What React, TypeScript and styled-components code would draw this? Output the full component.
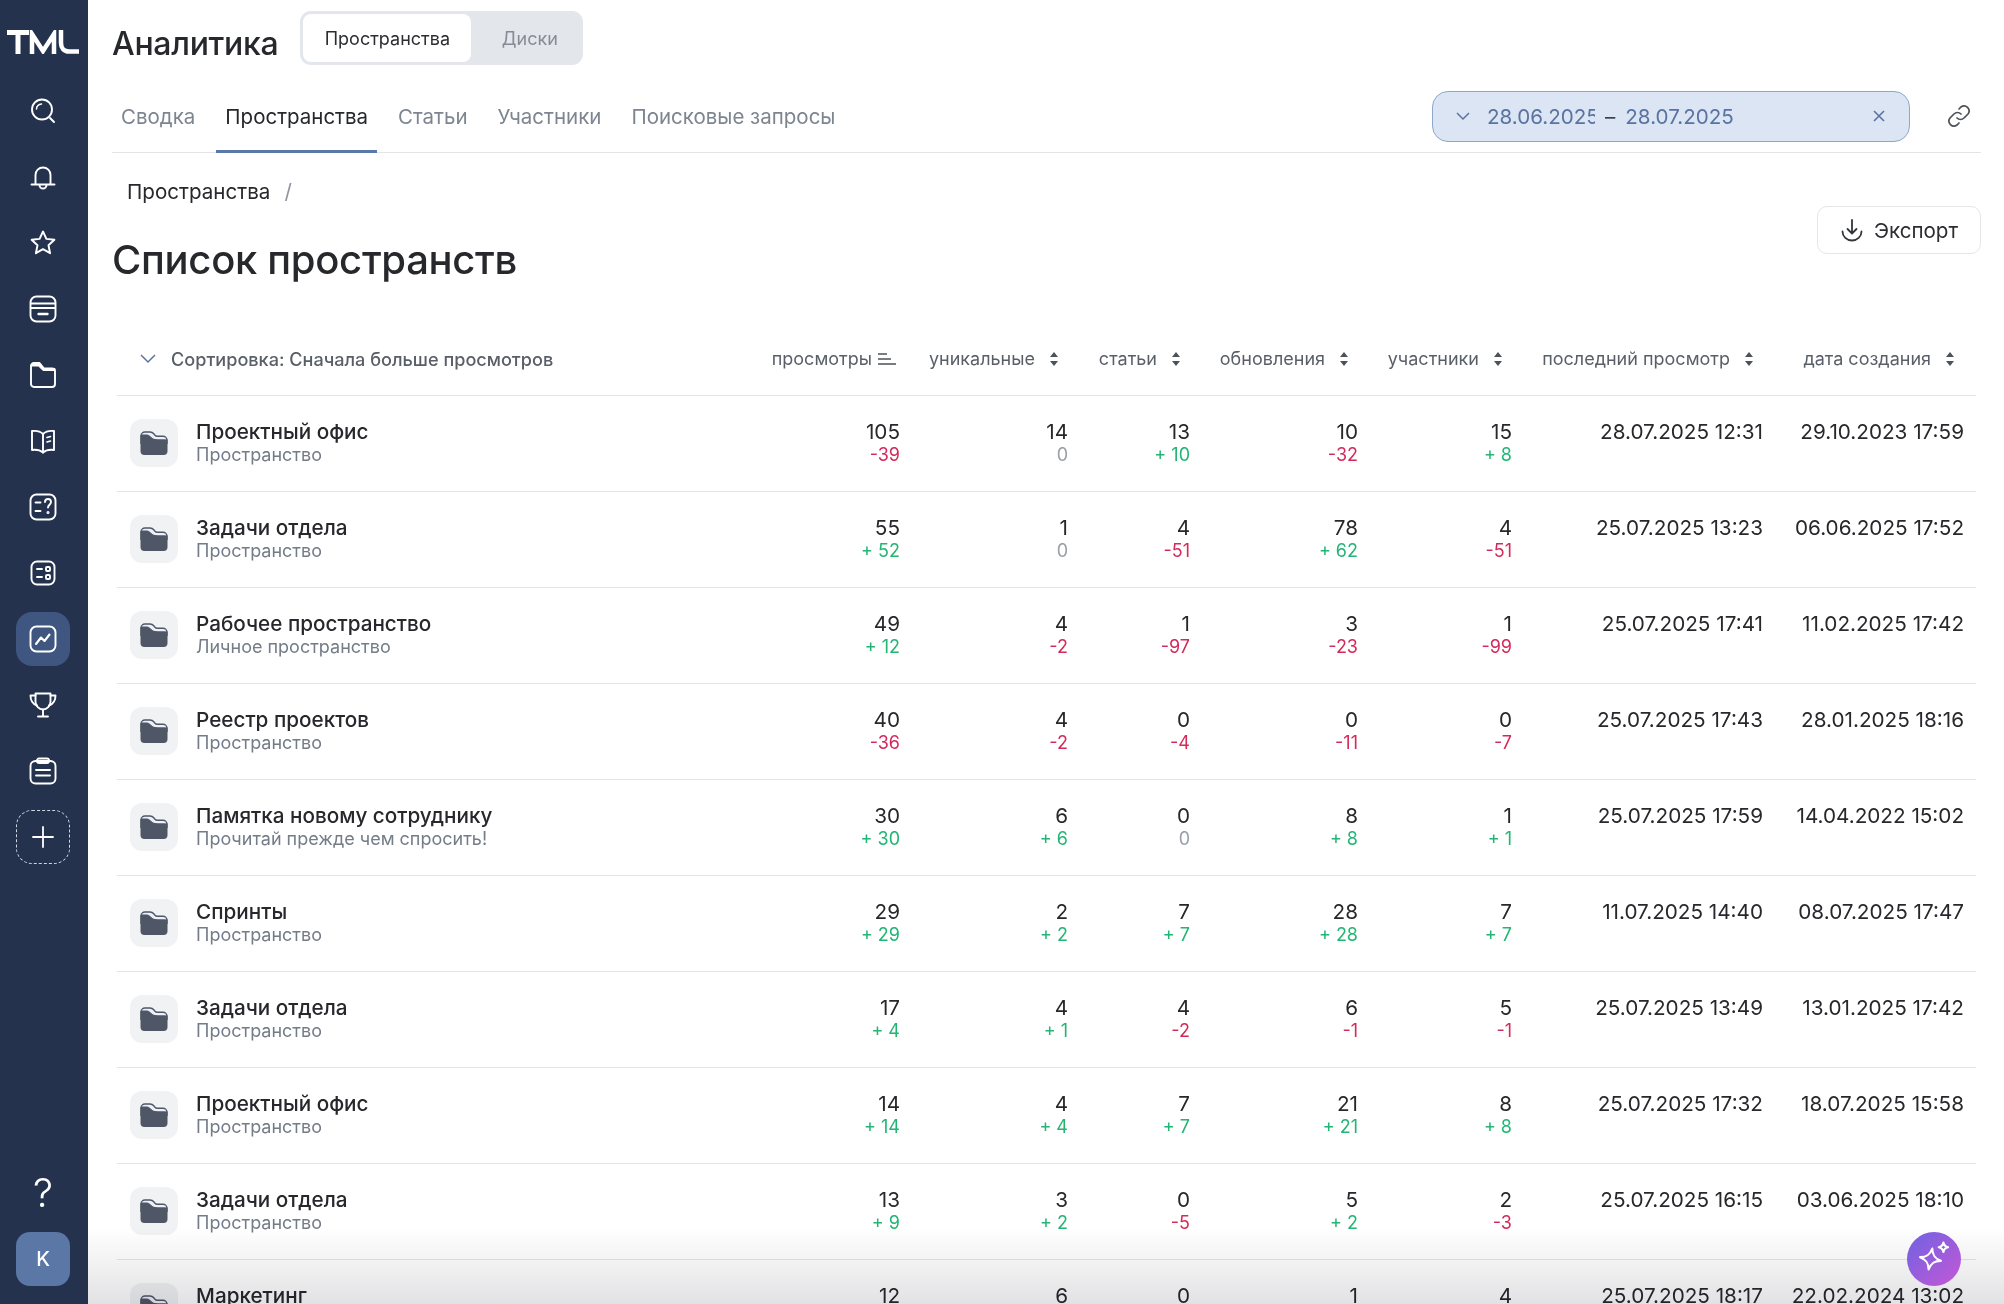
import { createGlobalStyle, styled } from "styled-components";
import type { ReactNode } from "react";

const GlobalStyle = createGlobalStyle`
  html, body {
    margin: 0;
    padding: 0;
    height: 100%;
    background: #fff;
    overflow: hidden;
  }
  body {
    font-family: "Inter", "Liberation Sans", sans-serif;
    color: #27282c;
  }
  * {
    box-sizing: border-box;
  }
`;

type Row = {
  name: string;
  sub: string;
  cells: [string, string][];
  last: string;
  created: string;
};

const rows: Row[] = [
  { name: "Проектный офис", sub: "Пространство", cells: [["105", "-39"], ["14", "0"], ["13", "+ 10"], ["10", "-32"], ["15", "+ 8"]], last: "28.07.2025 12:31", created: "29.10.2023 17:59" },
  { name: "Задачи отдела", sub: "Пространство", cells: [["55", "+ 52"], ["1", "0"], ["4", "-51"], ["78", "+ 62"], ["4", "-51"]], last: "25.07.2025 13:23", created: "06.06.2025 17:52" },
  { name: "Рабочее пространство", sub: "Личное пространство", cells: [["49", "+ 12"], ["4", "-2"], ["1", "-97"], ["3", "-23"], ["1", "-99"]], last: "25.07.2025 17:41", created: "11.02.2025 17:42" },
  { name: "Реестр проектов", sub: "Пространство", cells: [["40", "-36"], ["4", "-2"], ["0", "-4"], ["0", "-11"], ["0", "-7"]], last: "25.07.2025 17:43", created: "28.01.2025 18:16" },
  { name: "Памятка новому сотруднику", sub: "Прочитай прежде чем спросить!", cells: [["30", "+ 30"], ["6", "+ 6"], ["0", "0"], ["8", "+ 8"], ["1", "+ 1"]], last: "25.07.2025 17:59", created: "14.04.2022 15:02" },
  { name: "Спринты", sub: "Пространство", cells: [["29", "+ 29"], ["2", "+ 2"], ["7", "+ 7"], ["28", "+ 28"], ["7", "+ 7"]], last: "11.07.2025 14:40", created: "08.07.2025 17:47" },
  { name: "Задачи отдела", sub: "Пространство", cells: [["17", "+ 4"], ["4", "+ 1"], ["4", "-2"], ["6", "-1"], ["5", "-1"]], last: "25.07.2025 13:49", created: "13.01.2025 17:42" },
  { name: "Проектный офис", sub: "Пространство", cells: [["14", "+ 14"], ["4", "+ 4"], ["7", "+ 7"], ["21", "+ 21"], ["8", "+ 8"]], last: "25.07.2025 17:32", created: "18.07.2025 15:58" },
  { name: "Задачи отдела", sub: "Пространство", cells: [["13", "+ 9"], ["3", "+ 2"], ["0", "-5"], ["5", "+ 2"], ["2", "-3"]], last: "25.07.2025 16:15", created: "03.06.2025 18:10" },
  { name: "Маркетинг", sub: "Пространство", cells: [["12", "0"], ["6", "0"], ["0", "0"], ["1", "0"], ["4", "0"]], last: "25.07.2025 18:17", created: "22.02.2024 13:02" },
];

const columns = ["уникальные", "статьи", "обновления", "участники", "последний просмотр", "дата создания"];

const Page = styled.div`
  display: flex;
  width: 100%;
  height: 1304px;
  overflow: hidden;
  position: relative;
`;

const Sidebar = styled.nav`
  flex: 0 0 88px;
  background: #24324e;
  display: flex;
  flex-direction: column;
  align-items: center;
  padding: 30px 2px 18px 0;
`;

const Logo = styled.svg`
  width: 72px;
  height: 24px;
  margin-bottom: 30px;
`;

const NavList = styled.div`
  display: flex;
  flex-direction: column;
  align-items: center;
  gap: 12px;
`;

const NavItem = styled.div<{ $active?: boolean; $dashed?: boolean }>`
  width: 54px;
  height: 54px;
  border-radius: 16px;
  display: flex;
  align-items: center;
  justify-content: center;
  background: ${(p) => (p.$active ? "#3f5680" : "transparent")};
  border: ${(p) => (p.$dashed ? "1px dashed #cfd6e2" : "none")};
`;

const NavBottom = styled.div`
  margin-top: auto;
  display: flex;
  flex-direction: column;
  align-items: center;
  gap: 15px;
`;

const Help = styled.div`
  color: #fff;
  font-size: 40px;
  line-height: 48px;
  font-weight: 300;
`;

const Avatar = styled.div`
  width: 54px;
  height: 54px;
  border-radius: 14px;
  background: #5a77a6;
  color: #fff;
  font-size: 20px;
  font-weight: 500;
  display: flex;
  align-items: center;
  justify-content: center;
`;

const Main = styled.main`
  flex: 1;
  min-width: 0;
  padding: 11px 23px 0 24px;
`;

const TopRow = styled.div`
  display: flex;
  align-items: center;
  gap: 22px;
  height: 54px;
`;

const AppTitle = styled.h2`
  margin: 12px 0 0;
  font-size: 32px;
  line-height: 40px;
  font-weight: 500;
  letter-spacing: -0.3px;
`;

const Segmented = styled.div`
  display: flex;
  width: 283px;
  height: 54px;
  padding: 3px;
  border-radius: 11px;
  background: #e3e6ea;
`;

const Segment = styled.div<{ $active?: boolean }>`
  display: flex;
  align-items: center;
  justify-content: center;
  flex: ${(p) => (p.$active ? "0 0 168px" : "1")};
  padding-left: ${(p) => (p.$active ? "0" : "8px")};
  border-radius: 8px;
  font-size: 18px;
  background: ${(p) => (p.$active ? "#fff" : "transparent")};
  color: ${(p) => (p.$active ? "#2c2d31" : "#858c96")};
`;

const TabsBar = styled.div`
  display: flex;
  align-items: center;
  height: 64px;
  margin-top: 24px;
  border-bottom: 1px solid #e3e5e8;
`;

const Tabs = styled.div`
  display: flex;
  gap: 12px;
  height: 64px;
  margin-right: auto;
`;

const Tab = styled.div<{ $active?: boolean }>`
  padding: 0 9px 5px;
  display: flex;
  align-items: center;
  font-size: 20.5px;
  color: ${(p) => (p.$active ? "#27282c" : "#7d8590")};
  border-bottom: 3px solid ${(p) => (p.$active ? "#5a78a8" : "transparent")};
`;

const DatePicker = styled.div`
  width: 478px;
  height: 51px;
  margin: 0 37px 9px 0;
  padding: 0 24px 0 23px;
  display: flex;
  align-items: center;
  border-radius: 16px;
  border: 1px solid #8fa7cc;
  background: #dbe5f3;
  color: #5a73a0;
  font-size: 20.6px;
`;

const DateValue = styled.span<{ $clip?: boolean }>`
  display: block;
  overflow: hidden;
  white-space: nowrap;
  width: ${(p) => (p.$clip ? "108px" : "auto")};
`;

const DateDash = styled.span`
  margin: 0 10px;
  color: #33405a;
`;

const DateClear = styled.span`
  margin-left: auto;
  display: flex;
`;

const LinkButton = styled.div`
  display: flex;
  margin: 0 10px 9px 0;
`;

const HeadingRow = styled.div`
  display: flex;
  justify-content: space-between;
  align-items: flex-start;
`;

const HeadingText = styled.div`
  padding-top: 27px;
`;

const Breadcrumb = styled.div`
  display: flex;
  gap: 14px;
  padding-left: 15px;
  font-size: 20.6px;
  line-height: 24px;
`;

const BreadcrumbSep = styled.span`
  color: #8d949e;
`;

const PageTitle = styled.h1`
  margin: 32px 0 0;
  font-size: 40px;
  line-height: 48px;
  font-weight: 500;
  letter-spacing: -0.3px;
`;

const ExportButton = styled.button`
  margin-top: 53px;
  width: 164px;
  height: 48px;
  border: 1px solid #e4e6e9;
  border-radius: 10px;
  background: #fff;
  color: #2c2d31;
  font: inherit;
  font-size: 20.6px;
  display: flex;
  align-items: center;
  justify-content: center;
  gap: 10px;
`;

const Table = styled.div`
  margin: 38px 5px 0;
`;

const gridCols = "643px 140px 168px 122px 168px 154px 251px 201px";

const HeadRow = styled.div`
  display: grid;
  grid-template-columns: ${gridCols};
  align-items: center;
  height: 74px;
  border-bottom: 1px solid #e3e5e8;
  font-size: 18px;
  font-weight: 500;
  color: #5a5f67;
`;

const SortLabel = styled.div`
  display: flex;
  align-items: center;
  gap: 15px;
  padding-left: 23px;
  font-size: 18.1px;
`;

const HeadCell = styled.div<{ $sorted?: boolean }>`
  display: flex;
  align-items: center;
  justify-content: flex-end;
  white-space: nowrap;
  gap: ${(p) => (p.$sorted ? "6px" : "14px")};
  padding-right: ${(p) => (p.$sorted ? "4px" : "9px")};
  font-weight: 400;
`;

const BodyRow = styled.div`
  display: grid;
  grid-template-columns: ${gridCols};
  height: 96px;
  padding-top: 24px;
  border-bottom: 1px solid #e3e5e8;
`;

const NameCell = styled.div`
  display: flex;
  gap: 18px;
  padding-left: 13px;
`;

const FolderTile = styled.div`
  flex: 0 0 48px;
  width: 48px;
  height: 48px;
  margin-top: -1px;
  border-radius: 12px;
  background: #f1f2f3;
  display: flex;
  align-items: center;
  justify-content: center;
`;

const Name = styled.div`
  font-size: 20.7px;
  line-height: 24px;
  font-weight: 500;
`;

const Sub = styled.div`
  font-size: 18px;
  line-height: 22px;
  color: #747c88;
`;

const NumCell = styled.div`
  text-align: right;
  white-space: nowrap;
  font-size: 20.7px;
  line-height: 24px;
`;

const Delta = styled.div<{ $tone: string }>`
  font-size: 18px;
  line-height: 22px;
  color: ${(p) => p.$tone};
`;

const BottomFade = styled.div`
  position: absolute;
  left: 88px;
  right: 0;
  bottom: 0;
  height: 76px;
  pointer-events: none;
  mix-blend-mode: multiply;
  background: linear-gradient(to bottom, #fff, #e2e2e4);
`;

const AiButton = styled.div`
  position: absolute;
  left: 1907px;
  top: 1232px;
  width: 54px;
  height: 54px;
  border-radius: 50%;
  background: linear-gradient(135deg, #6f62e2, #c458d6);
  display: flex;
  align-items: center;
  justify-content: center;
`;

const Icon = ({ children, size = 28 }: { children: ReactNode; size?: number }) => (
  <svg width={size} height={size} viewBox="0 0 28 28" fill="none" stroke="#fff" strokeWidth="1.9" strokeLinecap="round" strokeLinejoin="round">
    {children}
  </svg>
);

const navIcons: ReactNode[] = [
  <>
    <circle cx="13" cy="12.5" r="10" />
    <path d="M7.5 12a5.5 5.5 0 0 1 5-5" strokeWidth="1.5" />
    <path d="M21 21l4 4" />
  </>,
  <>
    <path d="M6.5 21V12a7.5 7.5 0 0 1 15 0v9" />
    <path d="M2.5 21.5h23" />
    <path d="M10.5 22a3.5 3.5 0 0 0 7 0" />
  </>,
  <path d="M14 2.5l3.4 7.4 8 .9-5.9 5.4 1.6 8-7.1-4-7.1 4 1.6-8-5.9-5.4 8-.9z" />,
  <>
    <rect x="1.5" y="1.5" width="25" height="25" rx="6" />
    <path d="M2 8.5h24M2 13h24" />
    <path d="M9.5 19h9" strokeWidth="2.4" />
  </>,
  <>
    <path d="M2 5a3 3 0 0 1 3-3h5.500l4.500 5.500h8a3 3 0 0 1 3 3V23a3 3 0 0 1-3 3H5a3 3 0 0 1-3-3z" />
    <path d="M2 5a3 3 0 0 1 3-3h5.500l4.500 5.500h11v2H14L9.500 5H2z" fill="#fff" strokeWidth="1" />
  </>,
  <>
    <path d="M14 7c-3-3-7-3.5-11-3v19c4-.5 8 0 11 2.5 3-2.5 7-3 11-2.5V4c-4-.5-8 0-11 3z" />
    <path d="M14 7v18.5" />
    <path d="M18 10.5l3.5-1M18 15l3.5-1" strokeWidth="1.6" />
  </>,
  <>
    <rect x="1.5" y="1.5" width="25" height="25" rx="6" />
    <path d="M6.5 9.5h5M6.5 18h5" />
    <path d="M16 9c0-4 6-4 6 0 0 2.500-3 3-3 5.500" />
    <circle cx="19" cy="19.500" r=".6" />
  </>,
  <>
    <rect x="2.500" y="2.500" width="23" height="23" rx="5.500" />
    <path d="M8 10h5M8 18h5" />
    <rect x="17" y="8" width="4" height="4" rx="1" />
    <rect x="17" y="16" width="4" height="4" rx="1" />
  </>,
  <>
    <rect x="1.500" y="1.500" width="25" height="25" rx="6" />
    <path d="M7 19l5-6.500 3.500 3.500 5-6.500" strokeWidth="2.100" />
  </>,
  <>
    <path d="M6.500 2.500h15v8c0 4.500-3.500 8-7.500 8s-7.500-3.500-7.500-8z" />
    <path d="M6.500 4.500H1.500c0 5 2 8.500 6.500 10M21.500 4.500h5c0 5-2 8.500-6.500 10" />
    <path d="M14 18.500v6M9 25.500h10" />
  </>,
  <>
    <rect x="1.500" y="4" width="25" height="22.500" rx="5" />
    <rect x="8" y="1.500" width="12" height="4.500" rx="2" />
    <path d="M7 13h14M7 18.500h14" />
  </>,
];

const SortIcon = () => (
  <svg width="10" height="16" viewBox="0 0 10 16" fill="#4d5158">
    <path d="M5 1l4 5H1zM5 15l-4-5h8z" />
  </svg>
);

const SortedIcon = () => (
  <svg width="18" height="14" viewBox="0 0 18 14" fill="none" stroke="#4d5158" strokeWidth="1.4">
    <path d="M0 2h9M0 7h13M0 12h18" />
  </svg>
);

const FolderIcon = () => (
  <svg width="28" height="26" viewBox="0 0 28 26" fill="none">
    <path d="M1 6a4 4 0 0 1 4-4h5c2 0 3 .8 4 2l1 1.200c.7.800 1.300 1 2.200 1H23a4 4 0 0 1 4 4v3H1z" stroke="#50566a" strokeWidth="1.400" fill="#eef0f8" />
    <path d="M0.500 6c0-1 .500-1.500 1.500-1.500h5c3 0 4 4 8 4.500 4 .500 8 0 12.500.500V21a4 4 0 0 1-4 4H4.500a4 4 0 0 1-4-4z" fill="#4f5665" />
  </svg>
);

const deltaTone = (v: string) => {
  if (v.startsWith("+")) return "#22b573";
  if (v.startsWith("-")) return "#d32a5c";
  return "#9a9fa7";
};

export default function App() {
  return (
    <>
      <GlobalStyle />
      <Page>
        <Sidebar>
          <Logo viewBox="0 0 72 24" fill="none" stroke="#fff" strokeWidth="5">
            <path d="M0 2.500h22M11 2.500V24" />
            <path d="M25 24V4l11 17L47 4v20" strokeWidth="4.500" />
            <path d="M54 0v13c0 5 3 8.500 8 8.500H72" strokeWidth="4.500" />
          </Logo>
          <NavList>
            {navIcons.map((icon, i) => (
              <NavItem key={i} $active={i === 8}>
                <Icon>{icon}</Icon>
              </NavItem>
            ))}
            <NavItem $dashed>
              <svg width="22" height="22" viewBox="0 0 22 22" fill="none" stroke="#fff" strokeWidth="1.800" strokeLinecap="round">
                <path d="M11 1v20M1 11h20" />
              </svg>
            </NavItem>
          </NavList>
          <NavBottom>
            <Help>?</Help>
            <Avatar>K</Avatar>
          </NavBottom>
        </Sidebar>
        <Main>
          <TopRow>
            <AppTitle>Аналитика</AppTitle>
            <Segmented>
              <Segment $active>Пространства</Segment>
              <Segment>Диски</Segment>
            </Segmented>
          </TopRow>
          <TabsBar>
            <Tabs>
              <Tab>Сводка</Tab>
              <Tab $active>Пространства</Tab>
              <Tab>Статьи</Tab>
              <Tab>Участники</Tab>
              <Tab>Поисковые запросы</Tab>
            </Tabs>
            <DatePicker>
              <svg width="14" height="9" viewBox="0 0 14 9" fill="none" stroke="#5a73a0" strokeWidth="1.500" style={{ marginRight: 17 }}>
                <path d="M1 1l6 6 6-6" />
              </svg>
              <DateValue $clip>28.06.2025</DateValue>
              <DateDash>–</DateDash>
              <DateValue>28.07.2025</DateValue>
              <DateClear>
                <svg width="12" height="12" viewBox="0 0 12 12" fill="none" stroke="#5a73a0" strokeWidth="1.600">
                  <path d="M1 1l10 10M11 1L1 11" />
                </svg>
              </DateClear>
            </DatePicker>
            <LinkButton>
              <svg width="24" height="24" viewBox="0 0 24 24" fill="none" stroke="#4d5158" strokeWidth="1.700" strokeLinecap="round">
                <path d="M10 14a5 5 0 0 0 7 0l4-4a5 5 0 0 0-7-7l-2 2" />
                <path d="M14 10a5 5 0 0 0-7 0l-4 4a5 5 0 0 0 7 7l2-2" />
              </svg>
            </LinkButton>
          </TabsBar>
          <HeadingRow>
            <HeadingText>
              <Breadcrumb>
                <span>Пространства</span>
                <BreadcrumbSep>/</BreadcrumbSep>
              </Breadcrumb>
              <PageTitle>Список пространств</PageTitle>
            </HeadingText>
            <ExportButton>
              <svg width="24" height="24" viewBox="0 0 24 24" fill="none" stroke="#33363b" strokeWidth="1.800" strokeLinecap="round" strokeLinejoin="round">
                <path d="M12 2v13M7.500 11l4.500 4.500 4.500-4.500" />
                <path d="M2.500 13.500a9.500 9 0 0 0 19 0" />
              </svg>
              Экспорт
            </ExportButton>
          </HeadingRow>
          <Table>
            <HeadRow>
              <SortLabel>
                <svg width="16" height="10" viewBox="0 0 16 10" fill="none" stroke="#5a73a0" strokeWidth="1.500">
                  <path d="M1 1l7 7 7-7" />
                </svg>
                Сортировка: Сначала больше просмотров
              </SortLabel>
              <HeadCell $sorted>
                просмотры
                <SortedIcon />
              </HeadCell>
              {columns.map((c) => (
                <HeadCell key={c}>
                  {c}
                  <SortIcon />
                </HeadCell>
              ))}
            </HeadRow>
            {rows.map((r, i) => (
              <BodyRow key={i}>
                <NameCell>
                  <FolderTile>
                    <FolderIcon />
                  </FolderTile>
                  <div>
                    <Name>{r.name}</Name>
                    <Sub>{r.sub}</Sub>
                  </div>
                </NameCell>
                {r.cells.map(([value, delta], j) => (
                  <NumCell key={j}>
                    {value}
                    <Delta $tone={deltaTone(delta)}>{delta}</Delta>
                  </NumCell>
                ))}
                <NumCell>{r.last}</NumCell>
                <NumCell>{r.created}</NumCell>
              </BodyRow>
            ))}
          </Table>
        </Main>
        <BottomFade />
        <AiButton>
          <svg width="40" height="40" viewBox="0 0 34 34" fill="none" stroke="#fff" strokeWidth="1.800" strokeLinejoin="round">
            <path d="M14 8c1 5 3 8 9 9-6 1-8 4-9 9-1-5-3-8-9-9 6-1 8-4 9-9z" transform="rotate(10 14 17)" />
            <path d="M25 3c.5 2.500 1.500 3.500 4 4-2.500.5-3.500 1.500-4 4-.5-2.500-1.500-3.500-4-4 2.500-.5 3.500-1.500 4-4z" />
          </svg>
        </AiButton>
      </Page>
    </>
  );
}
